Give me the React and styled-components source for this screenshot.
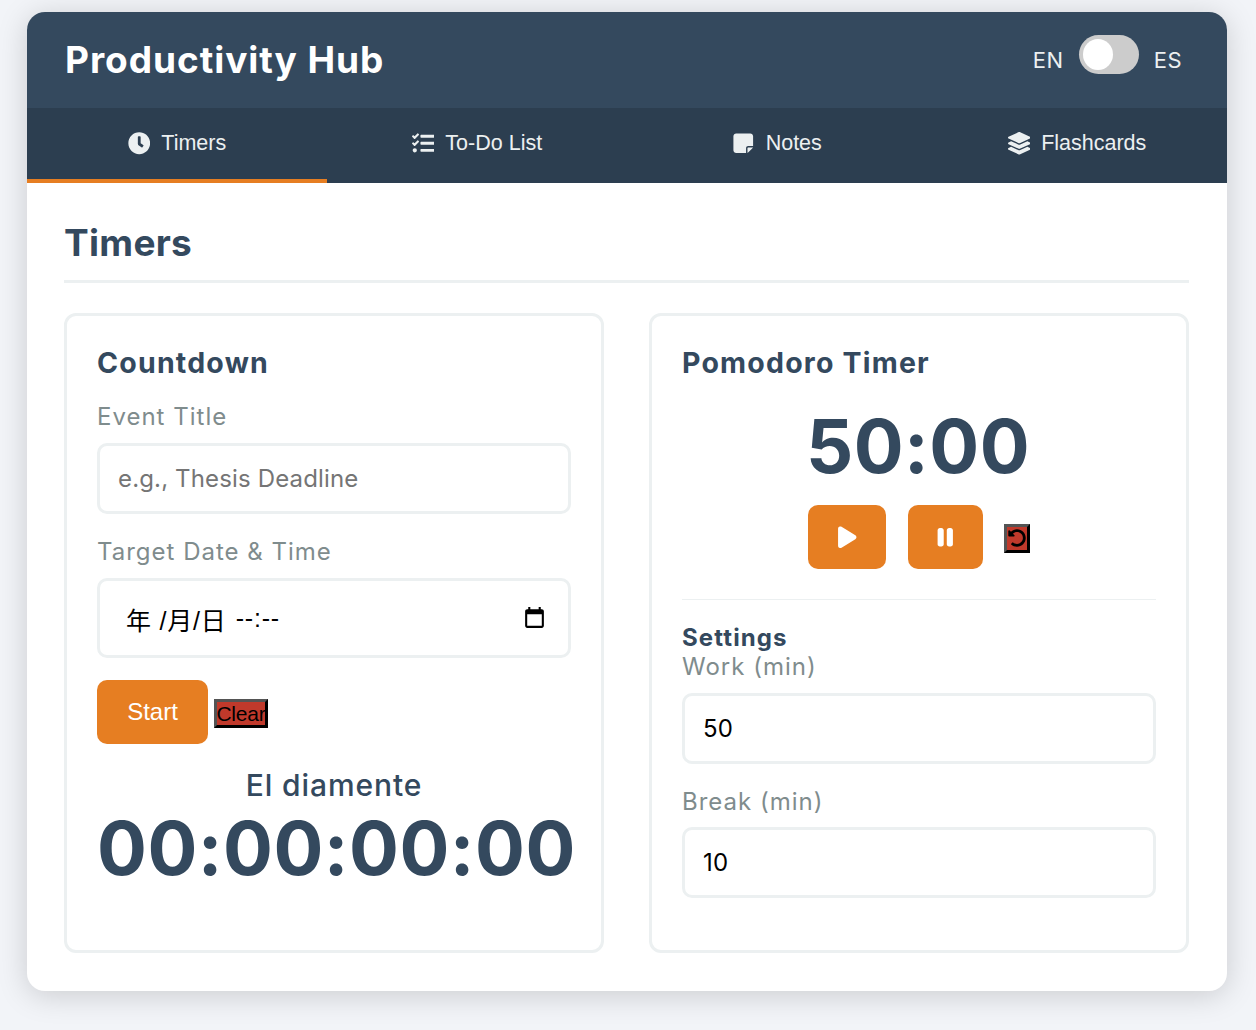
import React from 'react'
import styled, { createGlobalStyle } from 'styled-components'
import { FaClock, FaTasks, FaLayerGroup, FaUndoAlt } from 'react-icons/fa'
import { FaNoteSticky, FaPlay, FaPause } from 'react-icons/fa6'

const heading = '"Inter", "Open Sans", sans-serif'
const plain = '"Liberation Sans", Arial, sans-serif'

const GlobalStyle = createGlobalStyle`
  html, body { margin: 0; padding: 0; }
  body {
    min-height: 1030px;
    background: #f2f4f8;
    font-family: ${heading};
  }
  * { box-sizing: border-box; }
`

const Page = styled.div`
  padding: 12px 29px 39px 27px;
`

const Shell = styled.div`
  width: 1200px;
  height: 979px;
  background: #fff;
  border-radius: 18px;
  overflow: hidden;
  box-shadow: 0 4px 30px rgba(0, 0, 0, 0.17);
`

const Header = styled.header`
  height: 96px;
  background: #34495e;
  color: #fff;
  display: flex;
  align-items: center;
  justify-content: space-between;
  padding: 0 45px 0 38px;
`

const Brand = styled.h1`
  margin: 0 0 2px;
  font-size: 37px;
  font-weight: 700;
  letter-spacing: 0.95px;
`

const LangSwitch = styled.div`
  display: flex;
  align-items: center;
  gap: 15px;
  font-size: 22px;
  letter-spacing: 0.5px;
  color: #ecf0f1;
`

const Track = styled.div`
  width: 60px;
  height: 39px;
  margin-bottom: 11px;
  padding: 4px;
  border-radius: 20px;
  background: #ccc;
`

const Knob = styled.div`
  width: 30px;
  height: 31px;
  border-radius: 50%;
  background: #fff;
`

const Nav = styled.nav`
  height: 75px;
  display: grid;
  grid-template-columns: repeat(4, 300px);
  background: #2c3e50;
`

const Tab = styled.div`
  display: flex;
  align-items: center;
  justify-content: center;
  gap: 11px;
  font-family: ${plain};
  font-size: 21.5px;
  color: #ecf0f1;
  border-bottom: 4px solid ${({ $active }) => ($active ? '#e67e22' : 'transparent')};
  svg { font-size: 22.5px; width: auto; }
`

const Content = styled.main`
  padding: 37px 38px 37px 37px;
`

const SectionTitle = styled.h2`
  margin: 0 0 30px;
  height: 63px;
  padding-top: 1px;
  font-size: 37px;
  line-height: 44px;
  font-weight: 700;
  letter-spacing: 0.3px;
  color: #34495e;
  border-bottom: 3px solid #ecf0f1;
`

const Columns = styled.div`
  display: grid;
  grid-template-columns: 540px 540px;
  gap: 45px;
`

const Card = styled.section`
  height: 640px;
  padding: 30px;
  border: 3px solid #ecf0f1;
  border-radius: 12px;
`

const CardTitle = styled.h3`
  margin: 0 0 19px;
  font-size: 28.5px;
  line-height: 34px;
  font-weight: 700;
  letter-spacing: 1.2px;
  color: #34495e;
`

const Label = styled.label`
  display: block;
  font-size: 24px;
  line-height: 36px;
  letter-spacing: 1px;
  color: #7f8c8d;
  margin-bottom: ${({ $tight }) => ($tight ? 7 : 8)}px;
`

const Field = styled.input`
  display: block;
  width: 100%;
  height: 71px;
  margin-bottom: 20px;
  padding: 0 18px;
  border: 3px solid #ecf0f1;
  border-radius: 10px;
  outline: none;
  background: #fff;
  font-family: ${heading};
  font-size: 24px;
  letter-spacing: 0.15px;
  color: #000;
  &::placeholder { color: #757575; opacity: 1; }
`

const DateField = styled.div`
  display: flex;
  align-items: center;
  justify-content: space-between;
  height: 80px;
  margin-bottom: 22px;
  padding: 1px 21px 0 26px;
  border: 3px solid #ecf0f1;
  border-radius: 10px;
  color: #000;
`

const DateValue = styled.div`
  display: flex;
  align-items: center;
  gap: 9px;
  font-family: ${plain}, "Noto Sans CJK SC", sans-serif;
  font-size: 25px;
`

const DatePart = styled.span`
  letter-spacing: 0.8px;
  white-space: pre;
`

const ButtonRow = styled.div`
  display: flex;
  align-items: center;
  gap: 6px;
`

const Primary = styled.button`
  display: flex;
  align-items: center;
  justify-content: center;
  width: ${({ $w }) => $w}px;
  height: 64px;
  padding: 0;
  border: none;
  border-radius: 10px;
  background: #e67e22;
  color: #fff;
  font-family: ${plain};
  font-size: 24px;
  svg { font-size: 24.5px; width: auto; }
`

const Danger = styled.button`
  padding: 0;
  margin-top: 2px;
  border: 3px outset #000;
  background: #c0392b;
  color: #000;
  font-family: ${plain};
  font-size: 21px;
  line-height: 23px;
  letter-spacing: -0.2px;
  display: flex;
  align-items: center;
  justify-content: center;
  width: ${({ $w }) => $w}px;
  height: 29px;
`

const ResetButton = styled(Danger)`
  margin-left: -1px;
`

const EventName = styled.div`
  margin-top: 22px;
  text-align: center;
  font-size: 30px;
  line-height: 38px;
  font-weight: 500;
  letter-spacing: 0.9px;
  color: #34495e;
`

const Clock = styled.div`
  margin-top: 2px;
  text-align: center;
  font-size: 74px;
  line-height: 84px;
  font-weight: 700;
  letter-spacing: 0.5px;
  color: #34495e;
  white-space: nowrap;
`

const PomoClock = styled(Clock)`
  margin-top: 24px;
  padding-right: 2px;
`

const PomoButtons = styled.div`
  display: flex;
  align-items: center;
  justify-content: center;
  gap: 22px;
  margin-top: 17px;
`

const Divider = styled.hr`
  margin: 30px 0 24px;
  border: none;
  border-top: 1px solid #ecf0f1;
`

const SettingsTitle = styled.h4`
  margin: 0 0 -3px;
  font-size: 24px;
  line-height: 28px;
  font-weight: 700;
  letter-spacing: 1.1px;
  color: #34495e;
`

const CalendarIcon = () => (
  <svg width="25" height="25" viewBox="0 0 24 24" fill="#000">
    <path d="M19 3h-1V1h-2v2H8V1H6v2H5c-1.11 0-1.99.9-1.99 2L3 19c0 1.1.89 2 2 2h14c1.1 0 2-.9 2-2V5c0-1.1-.9-2-2-2zm0 16H5V8h14v11z" />
  </svg>
)

const App = () => {
  return (
    <Page>
      <GlobalStyle />
      <Shell>
        <Header>
          <Brand>Productivity Hub</Brand>
          <LangSwitch>
            <span>EN</span>
            <Track><Knob /></Track>
            <span>ES</span>
          </LangSwitch>
        </Header>
        <Nav>
          <Tab $active><FaClock />Timers</Tab>
          <Tab><FaTasks />To-Do List</Tab>
          <Tab><FaNoteSticky />Notes</Tab>
          <Tab><FaLayerGroup />Flashcards</Tab>
        </Nav>
        <Content>
          <SectionTitle>Timers</SectionTitle>
          <Columns>
            <Card>
              <CardTitle>Countdown</CardTitle>
              <Label>Event Title</Label>
              <Field placeholder="e.g., Thesis Deadline" />
              <Label>Target Date &amp; Time</Label>
              <DateField>
                <DateValue>
                  <DatePart>年 /月/日</DatePart>
                  <DatePart>--:--</DatePart>
                </DateValue>
                <CalendarIcon />
              </DateField>
              <ButtonRow>
                <Primary $w={111}>Start</Primary>
                <Danger $w={54}>Clear</Danger>
              </ButtonRow>
              <EventName>El diamente</EventName>
              <Clock>00:00:00:00</Clock>
            </Card>
            <Card>
              <CardTitle>Pomodoro Timer</CardTitle>
              <PomoClock>50:00</PomoClock>
              <PomoButtons>
                <Primary $w={78}><FaPlay /></Primary>
                <Primary $w={75}><FaPause /></Primary>
                <ResetButton $w={26}><FaUndoAlt size={18} /></ResetButton>
              </PomoButtons>
              <Divider />
              <SettingsTitle>Settings</SettingsTitle>
              <Label>Work (min)</Label>
              <Field defaultValue="50" />
              <Label $tight>Break (min)</Label>
              <Field defaultValue="10" />
            </Card>
          </Columns>
        </Content>
      </Shell>
    </Page>
  )
}

export default App
